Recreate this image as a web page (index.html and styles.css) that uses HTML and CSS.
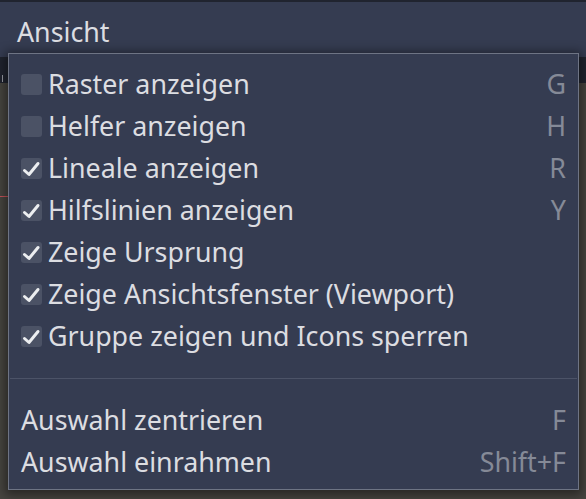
FILE: index.html
```html
<!DOCTYPE html>
<html lang="de">
<head>
<meta charset="utf-8">
<title>Ansicht</title>
<link rel="stylesheet" href="styles.css">
</head>
<body>
<div class="app">
  <div class="topline"></div>
  <header class="menubar"><span class="menu-title">Ansicht</span></header>
  <div class="toolbar"><span class="tick"></span></div>
  <div class="viewport"><span class="guide"></span></div>
</div>

<div class="popup">
  <div class="item"><span class="check"></span><span class="label">Raster anzeigen</span><span class="key">G</span></div>
  <div class="item"><span class="check"></span><span class="label">Helfer anzeigen</span><span class="key">H</span></div>
  <div class="item"><span class="check on"><svg viewBox="0 0 21 21"><path d="M3.5 12.5 L8 16.5 L17 5.5"/></svg></span><span class="label">Lineale anzeigen</span><span class="key">R</span></div>
  <div class="item"><span class="check on"><svg viewBox="0 0 21 21"><path d="M3.5 12.5 L8 16.5 L17 5.5"/></svg></span><span class="label">Hilfslinien anzeigen</span><span class="key">Y</span></div>
  <div class="item"><span class="check on"><svg viewBox="0 0 21 21"><path d="M3.5 12.5 L8 16.5 L17 5.5"/></svg></span><span class="label">Zeige Ursprung</span><span class="key"></span></div>
  <div class="item"><span class="check on"><svg viewBox="0 0 21 21"><path d="M3.5 12.5 L8 16.5 L17 5.5"/></svg></span><span class="label">Zeige Ansichtsfenster (Viewport)</span><span class="key"></span></div>
  <div class="item"><span class="check on"><svg viewBox="0 0 21 21"><path d="M3.5 12.5 L8 16.5 L17 5.5"/></svg></span><span class="label">Gruppe zeigen und Icons sperren</span><span class="key"></span></div>
  <div class="separator"><span class="line"></span></div>
  <div class="item plain"><span class="label">Auswahl zentrieren</span><span class="key">F</span></div>
  <div class="item plain"><span class="label">Auswahl einrahmen</span><span class="key">Shift+F</span></div>
</div>
</body>
</html>
```

FILE: styles.css
```css
* { box-sizing: border-box; }

html, body {
  margin: 0;
  padding: 0;
  width: 586px;
  height: 499px;
  overflow: hidden;
  background: #474540;
  font-family: "Noto Sans", "Open Sans", sans-serif;
}

.app {
  display: flex;
  flex-direction: column;
  height: 499px;
}

.topline {
  height: 2px;
  background: #20242f;
}

.menubar {
  height: 55px;
  background: #353c51;
  padding-left: 17px;
  display: flex;
  align-items: flex-start;
}

.menu-title {
  font-size: 26.8px;
  line-height: 36px;
  margin-top: 12px;
  color: #dcdde1;
}

.toolbar {
  height: 26px;
  background: #20242f;
  position: relative;
}

.tick {
  position: absolute;
  left: 2px;
  top: 18px;
  width: 1px;
  height: 7px;
  background: #9a9ca4;
}

.viewport {
  flex: 1;
  background: #474540;
  position: relative;
}

.guide {
  position: absolute;
  left: 0;
  top: 113px;
  width: 8px;
  height: 1px;
  background: #c4545a;
}

.popup {
  position: absolute;
  left: 8px;
  top: 53px;
  width: 571px;
  height: 437px;
  background: #353c51;
  border: 1px solid #6e7484;
  box-shadow: 0 2px 10px 3px rgba(0, 0, 0, 0.45);
  padding: 9px 12px 6px 12px;
  display: flex;
  flex-direction: column;
}

.item {
  height: 42px;
  display: flex;
  align-items: center;
  font-size: 26.8px;
  line-height: 42px;
  color: #dcdde1;
}

.check {
  width: 21px;
  height: 21px;
  border-radius: 3px;
  background: #4b5265;
  margin-right: 6px;
  flex: none;
  display: flex;
}

.check svg {
  width: 21px;
  height: 21px;
}

.check svg path {
  fill: none;
  stroke: #eceef0;
  stroke-width: 3;
  stroke-linecap: round;
  stroke-linejoin: round;
}

.label {
  flex: 1;
  white-space: nowrap;
}

.key {
  color: #858a97;
  white-space: nowrap;
}

.separator {
  height: 42px;
  display: flex;
  align-items: center;
  margin: 0 -11px;
}

.separator .line {
  flex: 1;
  height: 1px;
  background: #4c5367;
}
```
